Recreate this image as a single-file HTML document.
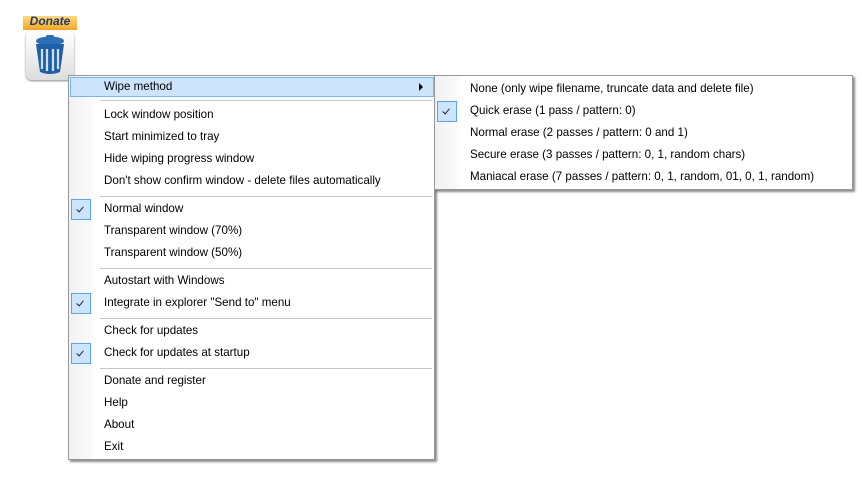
<!DOCTYPE html>
<html><head><meta charset="utf-8"><style>
body{margin:0;width:862px;height:492px;background:#fff;position:relative;font-family:"Liberation Sans",sans-serif;font-size:11.6px;color:#000;overflow:hidden}
.menu{position:absolute;background:#fff;border:1px solid #979797;box-shadow:2px 2px 2px rgba(0,0,0,.45);box-sizing:border-box}
.gut{position:absolute;left:0;top:0;bottom:0;background:linear-gradient(90deg,#f1f1f1,#fafafa 80%,#fff)}
.it{position:absolute;height:22px;line-height:22px;white-space:nowrap}
.sep{position:absolute;height:1px;background:#c8c8c8}
.chk{position:absolute;width:20px;height:21px;box-sizing:border-box;border:1px solid #5ba2f0;background:#cce4fc}
.chk:after{content:"";position:absolute;left:6px;top:5px;width:3px;height:6px;border:solid #222;border-width:0 1.5px 1.5px 0;transform:rotate(40deg)}
.hl{position:absolute;left:1px;top:1px;width:364px;height:20px;background:#cce4fc;border:1px solid #79b4f2;box-sizing:border-box}
</style></head><body>
<div style="position:absolute;left:23px;top:16px;width:54px;height:14px;background:linear-gradient(#ffd880,#f5a623);"></div>
<div style="position:absolute;left:23px;top:14px;width:54px;text-align:center;font:bold italic 12px 'Liberation Sans',sans-serif;color:#1e3a6a">Donate</div>
<div style="position:absolute;left:26px;top:31px;width:48px;height:49px;border-radius:6px;background:linear-gradient(#fff,#ddd);box-shadow:0 1px 2px #888"></div>
<svg style="position:absolute;left:30px;top:34px" width="40" height="42" viewBox="0 0 40 42">
<ellipse cx="20" cy="7" rx="14" ry="4.5" fill="#2a6fb8"/><rect x="16" y="1" width="8" height="4" rx="1.5" fill="#2a6fb8"/>
<path d="M6 10 H34 L30 38 Q20 42 10 38 Z" fill="#1f5fa8"/>
<path d="M12 15 V35 M17 15 V37 M23 15 V37 M28 15 V35" stroke="#cfe0f5" stroke-width="2.2"/>
</svg>

<div class="menu" style="left:68px;top:75px;width:367px;height:385px">
<div class="gut" style="width:27px"></div>
<div class="hl"></div>
<div class="it" style="left:35px;top:0">Wipe method</div>
<div style="position:absolute;left:350px;top:7px;width:0;height:0;border-left:4px solid #000;border-top:4px solid transparent;border-bottom:4px solid transparent"></div>
<div class="sep" style="left:31px;right:2px;top:24px"></div>
<div class="it" style="left:35px;top:28px">Lock window position</div>
<div class="it" style="left:35px;top:50px">Start minimized to tray</div>
<div class="it" style="left:35px;top:72px">Hide wiping progress window</div>
<div class="it" style="left:35px;top:94px">Don't show confirm window - delete files automatically</div>
<div class="sep" style="left:31px;right:2px;top:120px"></div>
<div class="chk" style="left:2px;top:123px"></div>
<div class="it" style="left:35px;top:122px">Normal window</div>
<div class="it" style="left:35px;top:144px">Transparent window (70%)</div>
<div class="it" style="left:35px;top:166px">Transparent window (50%)</div>
<div class="sep" style="left:31px;right:2px;top:192px"></div>
<div class="it" style="left:35px;top:194px">Autostart with Windows</div>
<div class="chk" style="left:2px;top:217px"></div>
<div class="it" style="left:35px;top:216px">Integrate in explorer "Send to" menu</div>
<div class="sep" style="left:31px;right:2px;top:242px"></div>
<div class="it" style="left:35px;top:244px">Check for updates</div>
<div class="chk" style="left:2px;top:267px"></div>
<div class="it" style="left:35px;top:266px">Check for updates at startup</div>
<div class="sep" style="left:31px;right:2px;top:292px"></div>
<div class="it" style="left:35px;top:294px">Donate and register</div>
<div class="it" style="left:35px;top:316px">Help</div>
<div class="it" style="left:35px;top:338px">About</div>
<div class="it" style="left:35px;top:360px">Exit</div>
</div>

<div class="menu" style="left:434px;top:75px;width:419px;height:115px">
<div class="gut" style="width:27px"></div>
<div class="it" style="left:35px;top:2px">None (only wipe filename, truncate data and delete file)</div>
<div class="chk" style="left:2px;top:25px"></div>
<div class="it" style="left:35px;top:24px">Quick erase (1 pass / pattern: 0)</div>
<div class="it" style="left:35px;top:46px">Normal erase (2 passes / pattern: 0 and 1)</div>
<div class="it" style="left:35px;top:68px">Secure erase (3 passes / pattern: 0, 1, random chars)</div>
<div class="it" style="left:35px;top:90px">Maniacal erase (7 passes / pattern: 0, 1, random, 01, 0, 1, random)</div>
</div>
</body></html>
